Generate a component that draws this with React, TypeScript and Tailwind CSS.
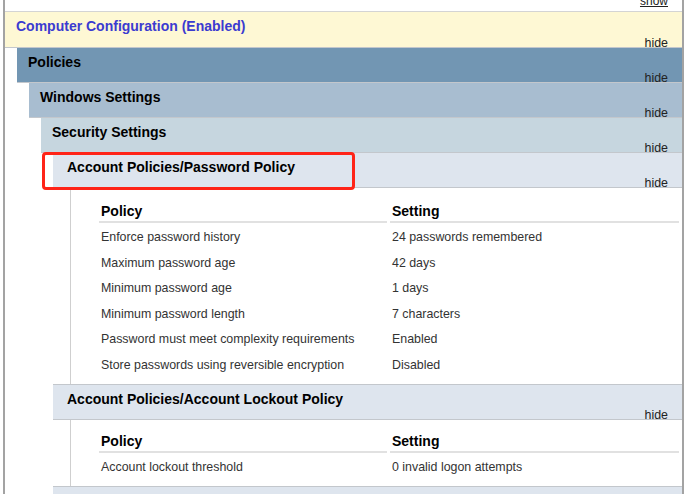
import React from 'react';

type Row = [string, string];

const passwordRows: Row[] = [
  ['Enforce password history', '24 passwords remembered'],
  ['Maximum password age', '42 days'],
  ['Minimum password age', '1 days'],
  ['Minimum password length', '7 characters'],
  ['Password must meet complexity requirements', 'Enabled'],
  ['Store passwords using reversible encryption', 'Disabled'],
];

const lockoutRows: Row[] = [['Account lockout threshold', '0 invalid logon attempts']];

const Bar: React.FC<{ title: string; bg: string; titleClass?: string; pl: string; h?: string }> = ({ title, bg, titleClass, pl, h }) => (
  <div className={`${h ?? 'h-[35px]'} ${bg} ${pl} border-b border-[#c3c7cc] flex flex-col justify-between`}>
    <div className={`pt-[6px] text-[14px] leading-[16px] font-bold ${titleClass ?? 'text-black'}`}>{title}</div>
    <div className="self-end pr-[14px] text-[12.4px] leading-[8px] text-[#222]">hide</div>
  </div>
);

const SettingsTable: React.FC<{ rows: Row[]; pt: string; pb: string }> = ({ rows, pt, pb }) => (
  <div className={`ml-[17px] border-l border-[#cfcfcf] pl-[28px] pr-[3px] ${pt} ${pb}`}>
    <div className="grid grid-cols-[288px_1fr] gap-x-[3px]">
      <div className="h-[23px] border-b-2 border-[#e1e1e1] pl-[2px] text-[14px] font-bold text-black leading-[22px]">Policy</div>
      <div className="h-[23px] border-b-2 border-[#e1e1e1] pl-[2px] text-[14px] font-bold text-black leading-[22px]">Setting</div>
      {rows.map(([p, s]) => (
        <React.Fragment key={p}>
          <div className="h-[25.5px] pl-[2px] pt-[7px] text-[12.4px] leading-[14px] text-[#333]">{p}</div>
          <div className="h-[25.5px] pl-[2px] pt-[7px] text-[12.4px] leading-[14px] text-[#333]">{s}</div>
        </React.Fragment>
      ))}
    </div>
  </div>
);

export default function App() {
  return (
    <div className="w-[698px] h-[494px] overflow-hidden bg-white relative" style={{ fontFamily: '"Liberation Sans", Arial, sans-serif' }}>
      <div className="ml-[3px] w-[681px] h-[494px] border-l-2 border-r-2 border-[#a3a3a3]">
        {/* clipped "show" link from the section above */}
        <div className="h-[11px] overflow-hidden flex justify-end items-end pb-[3px] pr-[14px]">
          <span className="text-[12px] leading-[14px] underline text-[#222]">show</span>
        </div>
        <div className="border-t border-[#d4d4d4]">
          <Bar title="Computer Configuration (Enabled)" bg="bg-[#fef8d4]" titleClass="text-[#3b3bd0]" pl="pl-[11px]" h="h-[36px]" />
          <div className="pl-[12px]">
            <Bar title="Policies" bg="bg-[#7296b3]" pl="pl-[11px]" />
            <div className="pl-[12px]">
              <Bar title="Windows Settings" bg="bg-[#a8bdd0]" pl="pl-[11px]" />
              <div className="pl-[12px]">
                <Bar title="Security Settings" bg="bg-[#c6d6df]" pl="pl-[11px]" />
                <div className="pl-[12px]">
                  <Bar title="Account Policies/Password Policy" bg="bg-[#dee5ee]" pl="pl-[14px]" />
                  <SettingsTable rows={passwordRows} pt="pt-[12px]" pb="pb-[8px]" />
                  <div className="border-t border-[#c3c7cc]">
                    <Bar title="Account Policies/Account Lockout Policy" bg="bg-[#dee5ee]" pl="pl-[14px]" />
                  </div>
                  <SettingsTable rows={lockoutRows} pt="pt-[10px]" pb="pb-[7px]" />
                  <div className="border-t border-[#c3c7cc] h-[35px] bg-[#dee5ee]" />
                </div>
              </div>
            </div>
          </div>
        </div>
      </div>
      {/* red highlight around the password policy heading */}
      <div className="absolute left-[42px] top-[152px] w-[313px] h-[38px] border-[3px] border-[#ff2418] rounded-[4px]" />
    </div>
  );
}
